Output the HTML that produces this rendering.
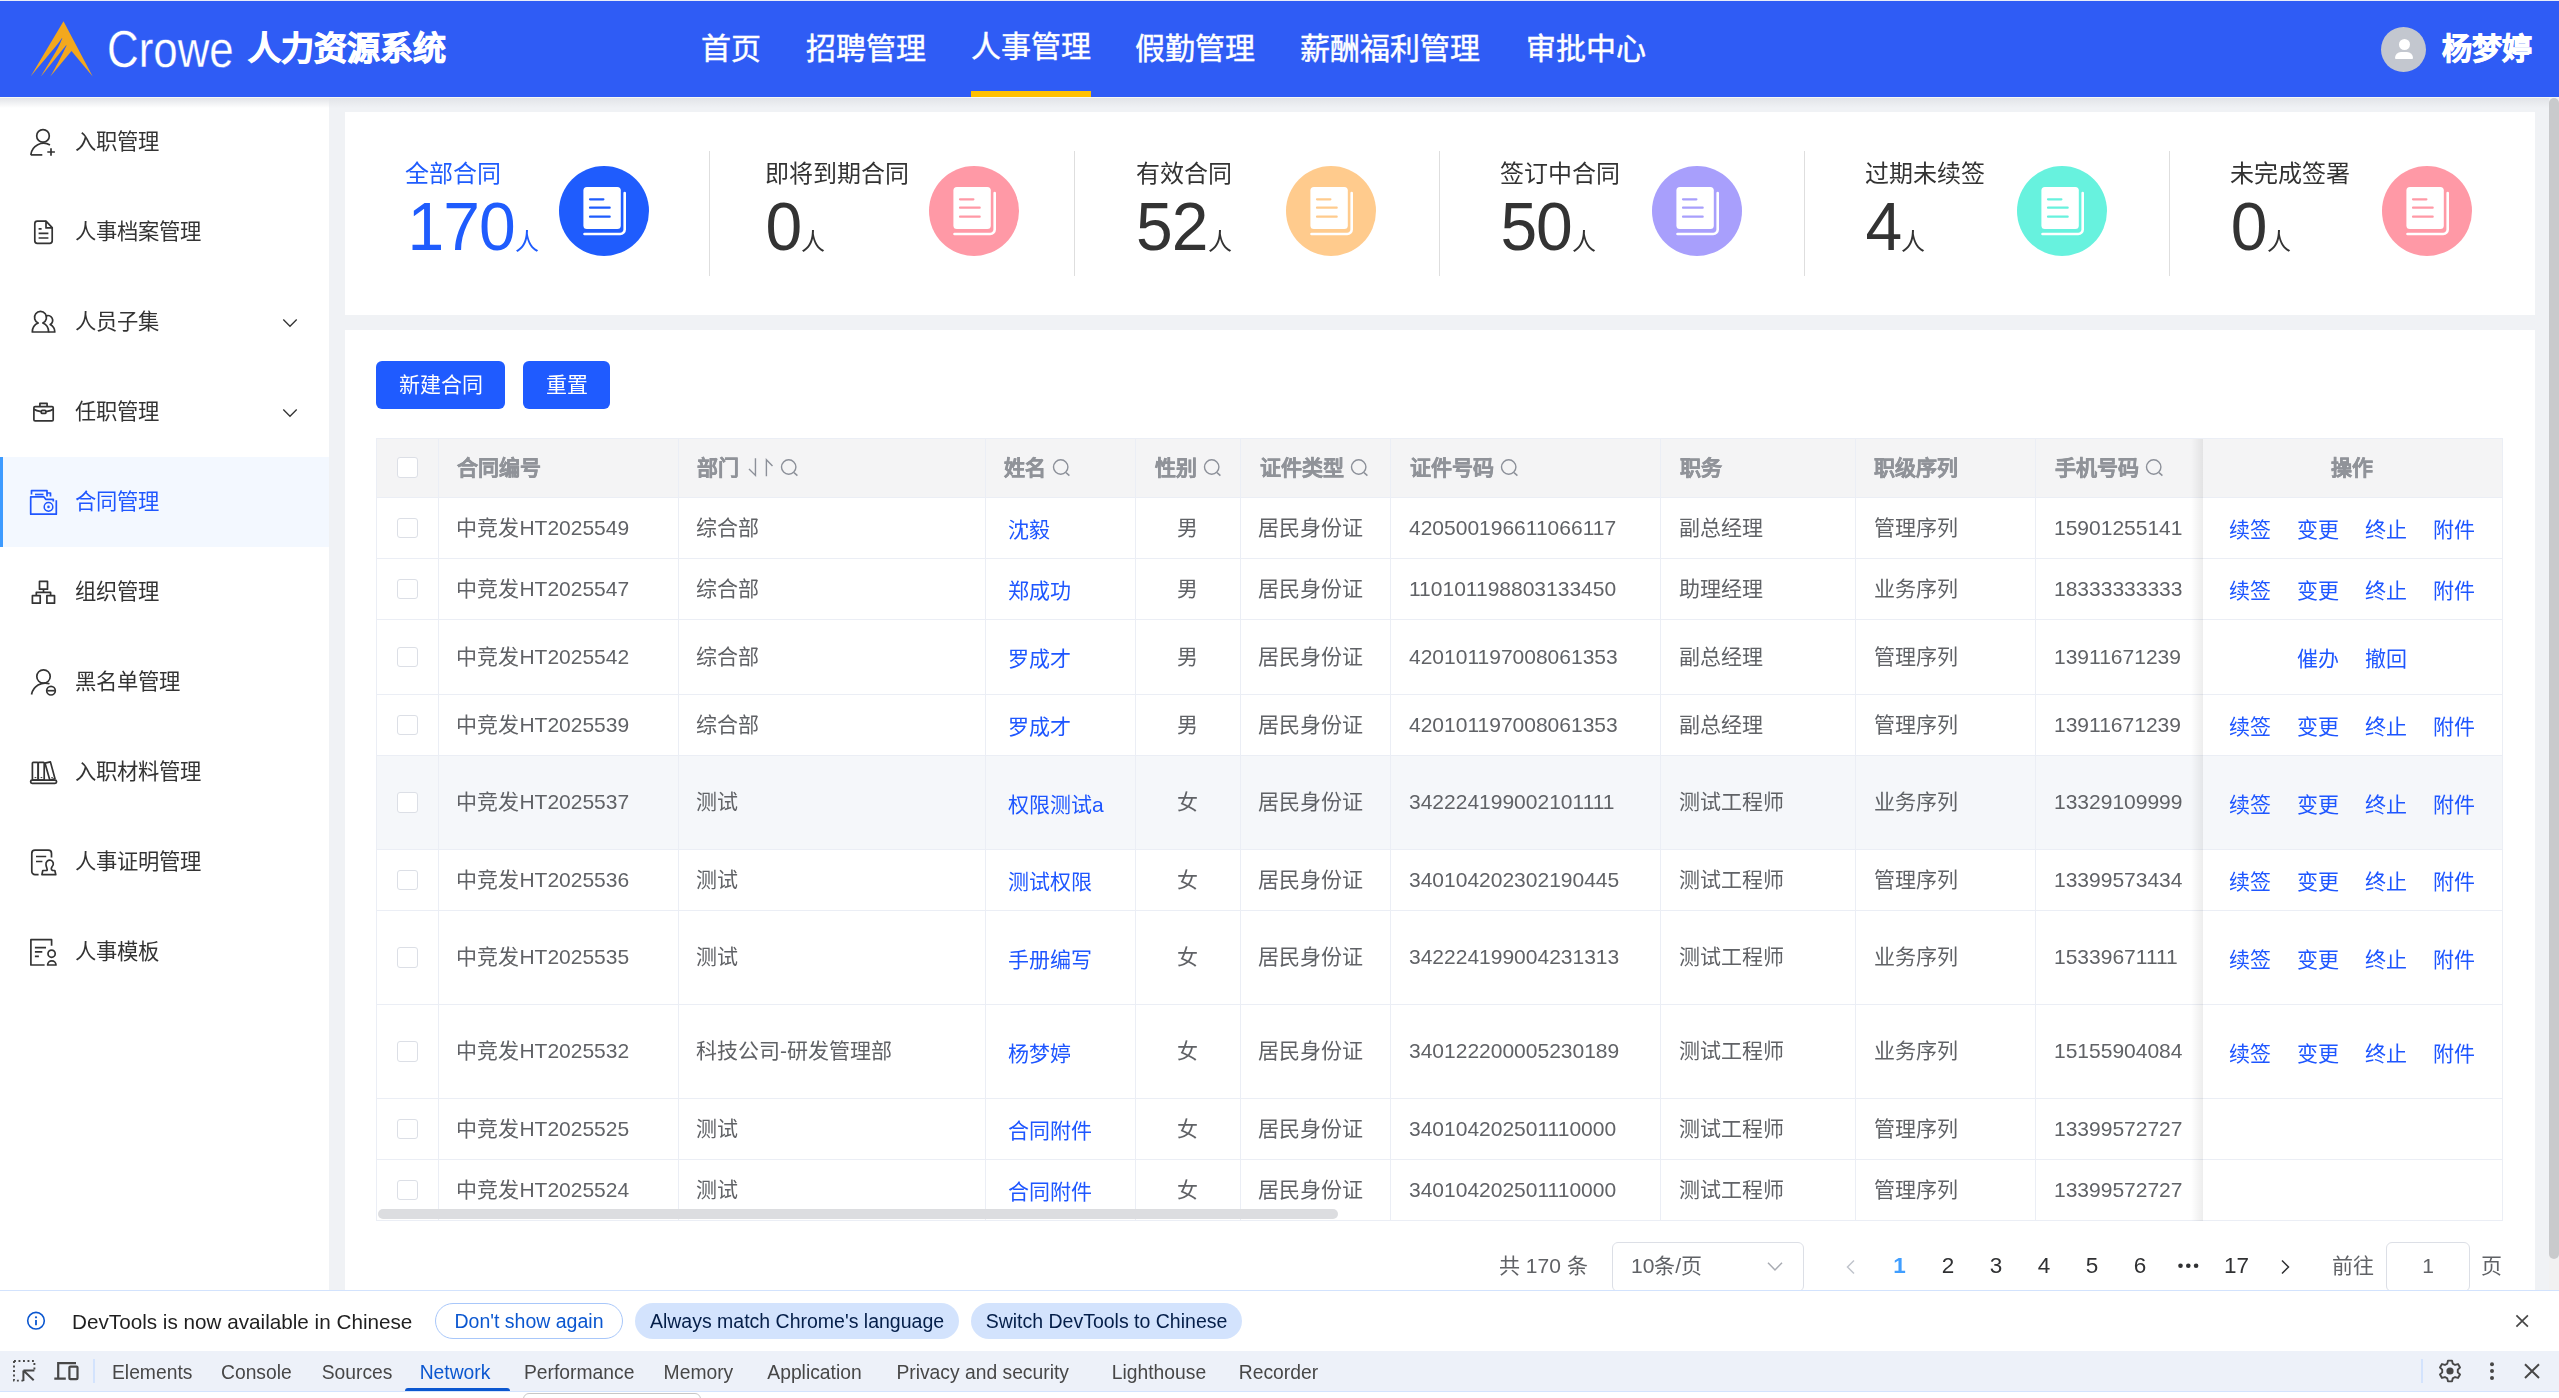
<!DOCTYPE html>
<html lang="zh-CN"><head><meta charset="utf-8">
<style>
*{box-sizing:border-box;margin:0;padding:0}
html,body{width:2559px;height:1398px;overflow:hidden}
body{position:relative;background:#f0f2f5;font-family:"Liberation Sans",sans-serif;color:#333}
.abs{position:absolute}
#topline{left:0;top:0;width:2559px;height:1px;background:#e8ecf8}
#hdr{left:0;top:1px;width:2559px;height:96px;background:#2f5cf5}
#hdrline{left:0;top:97px;width:2559px;height:1px;background:#f7f8f4}
#side{left:0;top:98px;width:329px;height:1192px;background:#fff}
#shadow{left:0;top:98px;width:2549px;height:10px;background:linear-gradient(#e2e4e8,rgba(240,242,245,0))}
.nav{top:-0.5px;height:97px;font-size:30px;color:#fff;line-height:97px;white-space:nowrap;-webkit-text-stroke:0.45px #fff}
.mi{left:0;width:329px;height:90px;font-size:21.3px;color:#333;white-space:nowrap}
.mi .t{position:absolute;left:75px;top:33px;line-height:24px}
.mi svg{position:absolute;left:28px;top:31px}
.mi .chev{position:absolute;left:282px;top:40px}
.card{background:#fff}
.sec{top:0;width:365px;height:203px}
.sep{top:39px;width:1px;height:125px;background:#dedede}
.stt{position:absolute;font-size:24px;line-height:28px;white-space:nowrap;color:#333}
.num{position:absolute;font-size:66px;line-height:66px;white-space:nowrap;color:#333;letter-spacing:-1px}
.num b{display:inline-block;font-weight:normal;transform:scaleY(1.045);transform-origin:0 85%}
.num small{font-size:24px}
.circ{position:absolute;width:90px;height:90px;border-radius:50%}
</style></head><body>
<div class="abs" id="topline"></div>
<div class="abs" id="hdr"></div>
<div class="abs" id="hdrline"></div>
<div class="abs" id="side"></div>
<div class="abs" id="shadow"></div>

<!-- logo -->
<svg class="abs" style="left:0;top:0" width="100" height="97" viewBox="0 0 100 97">
<path d="M63.5 21.2 L92.7 76.6 L71.5 50.9 L50.3 76.6 C54.5 70 62 55 66.6 45.5 Q66.9 44.8 65.9 45.6 L40.9 76.6 C48 64 58 50 62.3 38.3 Q62.5 37.6 61.6 38.6 C57.5 45 45 59 30.6 76.6 Z" fill="#f3a81e"/>
</svg>
<div class="abs" style="left:107px;top:14px;font-size:52.5px;line-height:70px;color:#fff;transform:scaleX(0.835);transform-origin:0 0;white-space:nowrap;-webkit-text-stroke:0.3px #2f5cf5">Crowe</div>
<div class="abs" style="left:248px;top:29px;font-size:33px;font-weight:bold;line-height:40px;color:#fff;-webkit-text-stroke:0.9px #fff;white-space:nowrap">人力资源系统</div>

<!-- nav -->
<div class="abs nav" style="left:701px">首页</div>
<div class="abs nav" style="left:806px">招聘管理</div>
<div class="abs nav" style="left:971px;top:-2.5px">人事管理</div>
<div class="abs" style="left:971px;top:91px;width:120px;height:6px;background:#ffc000"></div>
<div class="abs nav" style="left:1135px">假勤管理</div>
<div class="abs nav" style="left:1300px">薪酬福利管理</div>
<div class="abs nav" style="left:1526px">审批中心</div>

<!-- user -->
<div class="abs" style="left:2381px;top:27px;width:45px;height:45px;border-radius:50%;background:#c3c7cf"></div>
<div class="abs" style="left:2398.5px;top:39px;width:11px;height:11px;border-radius:50%;background:#fff"></div>
<div class="abs" style="left:2395px;top:52px;width:18px;height:7px;border-radius:6px 6px 1px 1px;background:#fff"></div>
<div class="abs" style="left:2441.5px;top:29px;font-size:30px;font-weight:bold;line-height:40px;color:#fff;-webkit-text-stroke:0.8px #fff;white-space:nowrap">杨梦婷</div>

<div id="wrap" style="position:absolute;left:0;top:0;width:2559px;height:1398px;will-change:transform">
<div class="abs" style="left:0;top:457px;width:329px;height:90px;background:#f3f8ff"></div>
<div class="abs" style="left:0;top:457px;width:3px;height:90px;background:#3d9bff"></div>
<div class="abs mi" style="top:97px"><svg width="40" height="40" viewBox="0 0 40 40" style="left:24px;top:25px" fill="none" stroke="#333" stroke-width="1.7" stroke-linejoin="round"><circle cx="19" cy="13.9" r="6.3"/><path d="M6.8 32.9 A13 13 0 0 1 26 22.9"/><path d="M6.8 32.9 H18.3"/><path d="M23.3 30 H30.9 M27 26.3 V33.7"/></svg><span class="t" style="color:#333">入职管理</span></div>
<div class="abs mi" style="top:187px"><svg width="40" height="40" viewBox="0 0 40 40" style="left:24px;top:25px" fill="none" stroke="#333" stroke-width="1.7" stroke-linejoin="round"><path d="M22 9.2 H13.3 A2.5 2.5 0 0 0 10.8 11.7 V28.8 A2.5 2.5 0 0 0 13.3 31.3 H25.7 A2.5 2.5 0 0 0 28.2 28.8 V15.6 L22 9.2 V15.9 H28.2"/><path d="M14.6 16.8 H17.6 M14.6 21.4 H24.4 M14.6 26 H24.4"/></svg><span class="t" style="color:#333">人事档案管理</span></div>
<div class="abs mi" style="top:277px"><svg width="40" height="40" viewBox="0 0 40 40" style="left:24px;top:25px" fill="none" stroke="#333" stroke-width="1.7" stroke-linejoin="round"><path d="M14.2 21 A6 6 0 1 1 18.8 21 C22.5 22.5 24.6 26 24.6 30 H8.3 C8.3 26 10.5 22.5 14.2 21 Z"/><path d="M21.6 14.2 A4.4 4.4 0 1 1 26.2 22.6 C28.8 24 30.8 27 30.8 30 H24.6"/></svg><span class="t" style="color:#333">人员子集</span><svg class="chev" width="20" height="12" viewBox="0 0 20 12" style="left:280px;top:41px"><path d="M3.3 1.5 L10 8.3 L16.7 1.5" fill="none" stroke="#333" stroke-width="1.3"/></svg></div>
<div class="abs mi" style="top:367px"><svg width="40" height="40" viewBox="0 0 40 40" style="left:24px;top:25px" fill="none" stroke="#333" stroke-width="1.7" stroke-linejoin="round"><rect x="9.9" y="14.6" width="19.3" height="14.3" rx="1.2"/><path d="M15.9 14.6 V11.4 H23.1 V14.6"/><path d="M9.9 17.2 C12 18.6 15 19.2 17.2 19.6 M22 19.6 C24.2 19.2 27.2 18.6 29.2 17.2"/><rect x="17.3" y="18.4" width="4.6" height="3" rx="1"/></svg><span class="t" style="color:#333">任职管理</span><svg class="chev" width="20" height="12" viewBox="0 0 20 12" style="left:280px;top:41px"><path d="M3.3 1.5 L10 8.3 L16.7 1.5" fill="none" stroke="#333" stroke-width="1.3"/></svg></div>
<div class="abs mi" style="top:457px"><svg width="40" height="40" viewBox="0 0 40 40" style="left:24px;top:25px" fill="none" stroke="#1f56ff" stroke-width="1.7" stroke-linejoin="round"><path d="M7.5 12.5 V8.6 H23 V14.6 M23 11 H26.5 V14.6"/><path d="M11 12.5 H19.5"/><path d="M29.3 19.6 V17.3 H21.7 L19.8 14.8 H6.7 V32.2 H32.3 V18.3"/><circle cx="24.5" cy="24.9" r="4.3" stroke-width="1.5"/><circle cx="24.5" cy="24.9" r="1.3" fill="#1f56ff" stroke="none"/></svg><span class="t" style="color:#1f56ff">合同管理</span></div>
<div class="abs mi" style="top:547px"><svg width="40" height="40" viewBox="0 0 40 40" style="left:24px;top:25px" fill="none" stroke="#333" stroke-width="1.7" stroke-linejoin="round"><rect x="15.5" y="9.3" width="8" height="7.9"/><path d="M19.5 17.2 V20.4 M12.3 23.7 V20.4 H26.6 V23.7"/><rect x="8.4" y="23.7" width="7.8" height="7.5"/><rect x="22.9" y="23.7" width="7.6" height="7.5"/></svg><span class="t" style="color:#333">组织管理</span></div>
<div class="abs mi" style="top:637px"><svg width="40" height="40" viewBox="0 0 40 40" style="left:24px;top:25px" fill="none" stroke="#333" stroke-width="1.7" stroke-linejoin="round"><circle cx="19.5" cy="14.5" r="6.7"/><path d="M7.5 32.5 A14 14 0 0 1 25.5 21.8"/><circle cx="27" cy="28.7" r="4.3"/><path d="M23.2 28.7 H30.8"/></svg><span class="t" style="color:#333">黑名单管理</span></div>
<div class="abs mi" style="top:727px"><svg width="40" height="40" viewBox="0 0 40 40" style="left:24px;top:25px" fill="none" stroke="#333" stroke-width="1.7" stroke-linejoin="round"><rect x="8.4" y="10.4" width="5.8" height="17.8" rx="0.8"/><rect x="14.2" y="10.4" width="6" height="17.8" rx="0.8"/><path d="M21 11.2 L26.4 9.9 L31 26.8 L25.8 28.1 Z"/><rect x="6.6" y="28.2" width="26" height="3.2" rx="1.6"/><path d="M10.6 25.6 H12.3 M16.6 25.6 H18.3 M27.3 25.6 H28.8" stroke-width="1"/></svg><span class="t" style="color:#333">入职材料管理</span></div>
<div class="abs mi" style="top:817px"><svg width="40" height="40" viewBox="0 0 40 40" style="left:24px;top:25px" fill="none" stroke="#333" stroke-width="1.7" stroke-linejoin="round"><path d="M14.6 32.6 H11 A3.2 3.2 0 0 1 7.8 29.4 V11.4 A3.2 3.2 0 0 1 11 8.2 H24.3 A3.2 3.2 0 0 1 27.5 11.4 V15.6"/><path d="M12 14.5 H22.2 M12 19.5 H18.4"/><path d="M22.9 28.5 C24 27 22 25.5 22 22.5 A3.7 3.7 0 1 1 28.2 24.5 C27.2 26 26.6 27.6 28.6 28.5 H30.8 L31.8 32.6 H17.9 L18.8 28.5 Z"/></svg><span class="t" style="color:#333">人事证明管理</span></div>
<div class="abs mi" style="top:907px"><svg width="40" height="40" viewBox="0 0 40 40" style="left:24px;top:25px" fill="none" stroke="#333" stroke-width="1.7" stroke-linejoin="round"><path d="M20.6 33 H6.9 V7.7 H27.6 V13.8"/><path d="M10.9 15.6 H22 M10.9 19.9 H18.3 M10.9 24.3 H14.9"/><circle cx="27.6" cy="21.7" r="3.6"/><path d="M23.6 33 A4.2 4.2 0 0 1 32 33 Z"/></svg><span class="t" style="color:#333">人事模板</span></div>
<div class="abs card" style="left:345px;top:112px;width:2190px;height:203px"></div>
<div class="abs stt" style="left:405px;top:159.5px;color:#1f5cfd">全部合同</div>
<div class="abs num" style="left:407.5px;top:193.5px;color:#1f5cfd"><b>170</b><small style="letter-spacing:0">人</small></div>
<div class="abs circ" style="left:559px;top:166px;background:#1f5cfd"><svg width="90" height="90" viewBox="0 0 90 90" style="position:absolute;left:0;top:0">
<path d="M65.7 27 V63.5 A4.5 4.5 0 0 1 61.2 68 H25.5" fill="none" stroke="#fff" stroke-width="2.6" stroke-linecap="round"/>
<rect x="24.4" y="21" width="37.4" height="42" rx="3.5" fill="#fff"/>
<path d="M31 33.3 H44.4 M31 41.7 H50.7 M31 50.7 H50.7" stroke="#1f5cfd" stroke-width="2.2" stroke-linecap="round"/></svg></div>
<div class="abs sep" style="left:709px;top:151px"></div>
<div class="abs stt" style="left:765px;top:159.5px;color:#333">即将到期合同</div>
<div class="abs num" style="left:765.4px;top:193.5px;color:#333"><b>0</b><small style="letter-spacing:0">人</small></div>
<div class="abs circ" style="left:928.6px;top:166px;background:#ff99a6"><svg width="90" height="90" viewBox="0 0 90 90" style="position:absolute;left:0;top:0">
<path d="M65.7 27 V63.5 A4.5 4.5 0 0 1 61.2 68 H25.5" fill="none" stroke="#fff" stroke-width="2.6" stroke-linecap="round"/>
<rect x="24.4" y="21" width="37.4" height="42" rx="3.5" fill="#fff"/>
<path d="M31 33.3 H44.4 M31 41.7 H50.7 M31 50.7 H50.7" stroke="#ff99a6" stroke-width="2.2" stroke-linecap="round"/></svg></div>
<div class="abs sep" style="left:1074px;top:151px"></div>
<div class="abs stt" style="left:1135.7px;top:159.5px;color:#333">有效合同</div>
<div class="abs num" style="left:1136.1000000000001px;top:193.5px;color:#333"><b>52</b><small style="letter-spacing:0">人</small></div>
<div class="abs circ" style="left:1286px;top:166px;background:#ffcb8d"><svg width="90" height="90" viewBox="0 0 90 90" style="position:absolute;left:0;top:0">
<path d="M65.7 27 V63.5 A4.5 4.5 0 0 1 61.2 68 H25.5" fill="none" stroke="#fff" stroke-width="2.6" stroke-linecap="round"/>
<rect x="24.4" y="21" width="37.4" height="42" rx="3.5" fill="#fff"/>
<path d="M31 33.3 H44.4 M31 41.7 H50.7 M31 50.7 H50.7" stroke="#ffcb8d" stroke-width="2.2" stroke-linecap="round"/></svg></div>
<div class="abs sep" style="left:1439px;top:151px"></div>
<div class="abs stt" style="left:1500px;top:159.5px;color:#333">签订中合同</div>
<div class="abs num" style="left:1500.4px;top:193.5px;color:#333"><b>50</b><small style="letter-spacing:0">人</small></div>
<div class="abs circ" style="left:1651.5px;top:166px;background:#a89ffc"><svg width="90" height="90" viewBox="0 0 90 90" style="position:absolute;left:0;top:0">
<path d="M65.7 27 V63.5 A4.5 4.5 0 0 1 61.2 68 H25.5" fill="none" stroke="#fff" stroke-width="2.6" stroke-linecap="round"/>
<rect x="24.4" y="21" width="37.4" height="42" rx="3.5" fill="#fff"/>
<path d="M31 33.3 H44.4 M31 41.7 H50.7 M31 50.7 H50.7" stroke="#a89ffc" stroke-width="2.2" stroke-linecap="round"/></svg></div>
<div class="abs sep" style="left:1804px;top:151px"></div>
<div class="abs stt" style="left:1865px;top:159.5px;color:#333">过期未续签</div>
<div class="abs num" style="left:1865.4px;top:193.5px;color:#333"><b>4</b><small style="letter-spacing:0">人</small></div>
<div class="abs circ" style="left:2016.8px;top:166px;background:#67f2de"><svg width="90" height="90" viewBox="0 0 90 90" style="position:absolute;left:0;top:0">
<path d="M65.7 27 V63.5 A4.5 4.5 0 0 1 61.2 68 H25.5" fill="none" stroke="#fff" stroke-width="2.6" stroke-linecap="round"/>
<rect x="24.4" y="21" width="37.4" height="42" rx="3.5" fill="#fff"/>
<path d="M31 33.3 H44.4 M31 41.7 H50.7 M31 50.7 H50.7" stroke="#67f2de" stroke-width="2.2" stroke-linecap="round"/></svg></div>
<div class="abs sep" style="left:2169px;top:151px"></div>
<div class="abs stt" style="left:2230.4px;top:159.5px;color:#333">未完成签署</div>
<div class="abs num" style="left:2230.8px;top:193.5px;color:#333"><b>0</b><small style="letter-spacing:0">人</small></div>
<div class="abs circ" style="left:2381.7px;top:166px;background:#ff99a6"><svg width="90" height="90" viewBox="0 0 90 90" style="position:absolute;left:0;top:0">
<path d="M65.7 27 V63.5 A4.5 4.5 0 0 1 61.2 68 H25.5" fill="none" stroke="#fff" stroke-width="2.6" stroke-linecap="round"/>
<rect x="24.4" y="21" width="37.4" height="42" rx="3.5" fill="#fff"/>
<path d="M31 33.3 H44.4 M31 41.7 H50.7 M31 50.7 H50.7" stroke="#ff99a6" stroke-width="2.2" stroke-linecap="round"/></svg></div>
<style>
.btn{background:#1f5bff;border-radius:6px;color:#fff;font-size:21px;line-height:48px;text-align:center;white-space:nowrap}
.cb{width:20.6px;height:20.6px;border:1.5px solid #dcdfe6;border-radius:3px;background:#fff}
.th{height:59px;line-height:59px;font-size:21px;font-weight:bold;color:#909399;white-space:nowrap;-webkit-text-stroke:0.4px #909399}
.td{font-size:21px;line-height:24px;color:#606266;white-space:nowrap}
.lk{color:#1e56ff}
.pg{font-size:21px;line-height:30px;color:#606266;white-space:nowrap}
.pgn{width:48px;text-align:center;font-size:22.5px;line-height:30px;white-space:nowrap}
</style>
<div class="abs card" style="left:345px;top:330px;width:2190px;height:960px"></div>
<div class="abs btn" style="left:376px;top:361px;width:129px;height:48px">新建合同</div>
<div class="abs btn" style="left:523px;top:361px;width:87px;height:48px">重置</div>
<div class="abs" style="left:376px;top:438px;width:2127px;height:59px;background:#f4f4f5"></div>
<div class="abs" style="left:376px;top:755px;width:2126px;height:94px;background:#f5f7fa"></div>
<div class="abs" style="left:376px;top:438px;width:2127px;height:1px;background:#ebeef5"></div>
<div class="abs" style="left:376px;top:497px;width:2127px;height:1px;background:#ebeef5"></div>
<div class="abs" style="left:376px;top:558px;width:2127px;height:1px;background:#ebeef5"></div>
<div class="abs" style="left:376px;top:619px;width:2127px;height:1px;background:#ebeef5"></div>
<div class="abs" style="left:376px;top:694px;width:2127px;height:1px;background:#ebeef5"></div>
<div class="abs" style="left:376px;top:755px;width:2127px;height:1px;background:#ebeef5"></div>
<div class="abs" style="left:376px;top:849px;width:2127px;height:1px;background:#ebeef5"></div>
<div class="abs" style="left:376px;top:910px;width:2127px;height:1px;background:#ebeef5"></div>
<div class="abs" style="left:376px;top:1004px;width:2127px;height:1px;background:#ebeef5"></div>
<div class="abs" style="left:376px;top:1098px;width:2127px;height:1px;background:#ebeef5"></div>
<div class="abs" style="left:376px;top:1159px;width:2127px;height:1px;background:#ebeef5"></div>
<div class="abs" style="left:376px;top:1220px;width:2127px;height:1px;background:#ebeef5"></div>
<div class="abs" style="left:376px;top:438px;width:1px;height:783px;background:#ebeef5"></div>
<div class="abs" style="left:438px;top:438px;width:1px;height:783px;background:#ebeef5"></div>
<div class="abs" style="left:678px;top:438px;width:1px;height:783px;background:#ebeef5"></div>
<div class="abs" style="left:985px;top:438px;width:1px;height:783px;background:#ebeef5"></div>
<div class="abs" style="left:1135px;top:438px;width:1px;height:783px;background:#ebeef5"></div>
<div class="abs" style="left:1240px;top:438px;width:1px;height:783px;background:#ebeef5"></div>
<div class="abs" style="left:1390px;top:438px;width:1px;height:783px;background:#ebeef5"></div>
<div class="abs" style="left:1660px;top:438px;width:1px;height:783px;background:#ebeef5"></div>
<div class="abs" style="left:1855px;top:438px;width:1px;height:783px;background:#ebeef5"></div>
<div class="abs" style="left:2035px;top:438px;width:1px;height:783px;background:#ebeef5"></div>
<div class="abs" style="left:2502px;top:438px;width:1px;height:783px;background:#ebeef5"></div>
<div class="abs" style="left:2191px;top:439px;width:12px;height:782px;background:linear-gradient(90deg,rgba(0,0,0,0),rgba(0,0,0,0.07))"></div>
<div class="abs cb" style="left:397px;top:457px"></div>
<div class="abs th" style="left:456.5px;top:437.5px">合同编号</div>
<div class="abs th" style="left:696.5px;top:437.5px">部门</div>
<div class="abs th" style="left:1004.0px;top:437.5px">姓名</div>
<svg class="abs" style="left:1051px;top:457px" width="20" height="20" viewBox="0 0 20 20"><circle cx="9.7" cy="10" r="7.2" fill="none" stroke="#8c9099" stroke-width="1.4"/><path d="M15 15.6 L18.4 18.6" stroke="#8c9099" stroke-width="1.5"/></svg>
<div class="abs th" style="left:1154.9px;top:437.5px">性别</div>
<svg class="abs" style="left:1202px;top:457px" width="20" height="20" viewBox="0 0 20 20"><circle cx="9.7" cy="10" r="7.2" fill="none" stroke="#8c9099" stroke-width="1.4"/><path d="M15 15.6 L18.4 18.6" stroke="#8c9099" stroke-width="1.5"/></svg>
<div class="abs th" style="left:1259.5px;top:437.5px">证件类型</div>
<svg class="abs" style="left:1349px;top:457px" width="20" height="20" viewBox="0 0 20 20"><circle cx="9.7" cy="10" r="7.2" fill="none" stroke="#8c9099" stroke-width="1.4"/><path d="M15 15.6 L18.4 18.6" stroke="#8c9099" stroke-width="1.5"/></svg>
<div class="abs th" style="left:1409.5px;top:437.5px">证件号码</div>
<svg class="abs" style="left:1499px;top:457px" width="20" height="20" viewBox="0 0 20 20"><circle cx="9.7" cy="10" r="7.2" fill="none" stroke="#8c9099" stroke-width="1.4"/><path d="M15 15.6 L18.4 18.6" stroke="#8c9099" stroke-width="1.5"/></svg>
<div class="abs th" style="left:1679.5px;top:437.5px">职务</div>
<div class="abs th" style="left:1874.0px;top:437.5px">职级序列</div>
<div class="abs th" style="left:2054.5px;top:437.5px">手机号码</div>
<svg class="abs" style="left:2144px;top:457px" width="20" height="20" viewBox="0 0 20 20"><circle cx="9.7" cy="10" r="7.2" fill="none" stroke="#8c9099" stroke-width="1.4"/><path d="M15 15.6 L18.4 18.6" stroke="#8c9099" stroke-width="1.5"/></svg>
<svg class="abs" style="left:745px;top:455px" width="32" height="24" viewBox="0 0 32 24"><path d="M10.45 3.2 V20.4 L4 13.9 M21.4 21.3 V4.8 L27.5 11.1" fill="none" stroke="#8c9099" stroke-width="1.4"/></svg>
<svg class="abs" style="left:779px;top:457px" width="20" height="20" viewBox="0 0 20 20"><circle cx="9.7" cy="10" r="7.2" fill="none" stroke="#8c9099" stroke-width="1.4"/><path d="M15 15.6 L18.4 18.6" stroke="#8c9099" stroke-width="1.5"/></svg>
<div class="abs cb" style="left:397px;top:517.5px"></div>
<div class="abs td" style="left:456.4px;top:515.5px">中竞发HT2025549</div>
<div class="abs td" style="left:696px;top:515.5px">综合部</div>
<div class="abs td" style="left:1409px;top:515.5px">420500196611066117</div>
<div class="abs td" style="left:1678.5px;top:515.5px">副总经理</div>
<div class="abs td" style="left:1873.5px;top:515.5px">管理序列</div>
<div class="abs td" style="left:2054px;top:515.5px">15901255141</div>
<div class="abs td" style="left:1258.4px;top:515.5px">居民身份证</div>
<div class="abs td lk" style="left:1008px;top:518.0px">沈毅</div>
<div class="abs td" style="left:1135px;top:515.5px;width:105px;text-align:center">男</div>
<div class="abs td lk" style="left:2228.7px;top:518.0px">续签</div>
<div class="abs td lk" style="left:2296.8999999999996px;top:518.0px">变更</div>
<div class="abs td lk" style="left:2365.1px;top:518.0px">终止</div>
<div class="abs td lk" style="left:2433.2999999999997px;top:518.0px">附件</div>
<div class="abs cb" style="left:397px;top:578.5px"></div>
<div class="abs td" style="left:456.4px;top:576.5px">中竞发HT2025547</div>
<div class="abs td" style="left:696px;top:576.5px">综合部</div>
<div class="abs td" style="left:1409px;top:576.5px">110101198803133450</div>
<div class="abs td" style="left:1678.5px;top:576.5px">助理经理</div>
<div class="abs td" style="left:1873.5px;top:576.5px">业务序列</div>
<div class="abs td" style="left:2054px;top:576.5px">18333333333</div>
<div class="abs td" style="left:1258.4px;top:576.5px">居民身份证</div>
<div class="abs td lk" style="left:1008px;top:579.0px">郑成功</div>
<div class="abs td" style="left:1135px;top:576.5px;width:105px;text-align:center">男</div>
<div class="abs td lk" style="left:2228.7px;top:579.0px">续签</div>
<div class="abs td lk" style="left:2296.8999999999996px;top:579.0px">变更</div>
<div class="abs td lk" style="left:2365.1px;top:579.0px">终止</div>
<div class="abs td lk" style="left:2433.2999999999997px;top:579.0px">附件</div>
<div class="abs cb" style="left:397px;top:646.5px"></div>
<div class="abs td" style="left:456.4px;top:644.5px">中竞发HT2025542</div>
<div class="abs td" style="left:696px;top:644.5px">综合部</div>
<div class="abs td" style="left:1409px;top:644.5px">420101197008061353</div>
<div class="abs td" style="left:1678.5px;top:644.5px">副总经理</div>
<div class="abs td" style="left:1873.5px;top:644.5px">管理序列</div>
<div class="abs td" style="left:2054px;top:644.5px">13911671239</div>
<div class="abs td" style="left:1258.4px;top:644.5px">居民身份证</div>
<div class="abs td lk" style="left:1008px;top:647.0px">罗成才</div>
<div class="abs td" style="left:1135px;top:644.5px;width:105px;text-align:center">男</div>
<div class="abs td lk" style="left:2297.3px;top:647.0px">催办</div>
<div class="abs td lk" style="left:2364.8px;top:647.0px">撤回</div>
<div class="abs cb" style="left:397px;top:714.5px"></div>
<div class="abs td" style="left:456.4px;top:712.5px">中竞发HT2025539</div>
<div class="abs td" style="left:696px;top:712.5px">综合部</div>
<div class="abs td" style="left:1409px;top:712.5px">420101197008061353</div>
<div class="abs td" style="left:1678.5px;top:712.5px">副总经理</div>
<div class="abs td" style="left:1873.5px;top:712.5px">管理序列</div>
<div class="abs td" style="left:2054px;top:712.5px">13911671239</div>
<div class="abs td" style="left:1258.4px;top:712.5px">居民身份证</div>
<div class="abs td lk" style="left:1008px;top:715.0px">罗成才</div>
<div class="abs td" style="left:1135px;top:712.5px;width:105px;text-align:center">男</div>
<div class="abs td lk" style="left:2228.7px;top:715.0px">续签</div>
<div class="abs td lk" style="left:2296.8999999999996px;top:715.0px">变更</div>
<div class="abs td lk" style="left:2365.1px;top:715.0px">终止</div>
<div class="abs td lk" style="left:2433.2999999999997px;top:715.0px">附件</div>
<div class="abs cb" style="left:397px;top:792.0px"></div>
<div class="abs td" style="left:456.4px;top:790.0px">中竞发HT2025537</div>
<div class="abs td" style="left:696px;top:790.0px">测试</div>
<div class="abs td" style="left:1409px;top:790.0px">342224199002101111</div>
<div class="abs td" style="left:1678.5px;top:790.0px">测试工程师</div>
<div class="abs td" style="left:1873.5px;top:790.0px">业务序列</div>
<div class="abs td" style="left:2054px;top:790.0px">13329109999</div>
<div class="abs td" style="left:1258.4px;top:790.0px">居民身份证</div>
<div class="abs td lk" style="left:1008px;top:792.5px">权限测试a</div>
<div class="abs td" style="left:1135px;top:790.0px;width:105px;text-align:center">女</div>
<div class="abs td lk" style="left:2228.7px;top:792.5px">续签</div>
<div class="abs td lk" style="left:2296.8999999999996px;top:792.5px">变更</div>
<div class="abs td lk" style="left:2365.1px;top:792.5px">终止</div>
<div class="abs td lk" style="left:2433.2999999999997px;top:792.5px">附件</div>
<div class="abs cb" style="left:397px;top:869.5px"></div>
<div class="abs td" style="left:456.4px;top:867.5px">中竞发HT2025536</div>
<div class="abs td" style="left:696px;top:867.5px">测试</div>
<div class="abs td" style="left:1409px;top:867.5px">340104202302190445</div>
<div class="abs td" style="left:1678.5px;top:867.5px">测试工程师</div>
<div class="abs td" style="left:1873.5px;top:867.5px">管理序列</div>
<div class="abs td" style="left:2054px;top:867.5px">13399573434</div>
<div class="abs td" style="left:1258.4px;top:867.5px">居民身份证</div>
<div class="abs td lk" style="left:1008px;top:870.0px">测试权限</div>
<div class="abs td" style="left:1135px;top:867.5px;width:105px;text-align:center">女</div>
<div class="abs td lk" style="left:2228.7px;top:870.0px">续签</div>
<div class="abs td lk" style="left:2296.8999999999996px;top:870.0px">变更</div>
<div class="abs td lk" style="left:2365.1px;top:870.0px">终止</div>
<div class="abs td lk" style="left:2433.2999999999997px;top:870.0px">附件</div>
<div class="abs cb" style="left:397px;top:947.0px"></div>
<div class="abs td" style="left:456.4px;top:945.0px">中竞发HT2025535</div>
<div class="abs td" style="left:696px;top:945.0px">测试</div>
<div class="abs td" style="left:1409px;top:945.0px">342224199004231313</div>
<div class="abs td" style="left:1678.5px;top:945.0px">测试工程师</div>
<div class="abs td" style="left:1873.5px;top:945.0px">业务序列</div>
<div class="abs td" style="left:2054px;top:945.0px">15339671111</div>
<div class="abs td" style="left:1258.4px;top:945.0px">居民身份证</div>
<div class="abs td lk" style="left:1008px;top:947.5px">手册编写</div>
<div class="abs td" style="left:1135px;top:945.0px;width:105px;text-align:center">女</div>
<div class="abs td lk" style="left:2228.7px;top:947.5px">续签</div>
<div class="abs td lk" style="left:2296.8999999999996px;top:947.5px">变更</div>
<div class="abs td lk" style="left:2365.1px;top:947.5px">终止</div>
<div class="abs td lk" style="left:2433.2999999999997px;top:947.5px">附件</div>
<div class="abs cb" style="left:397px;top:1041.0px"></div>
<div class="abs td" style="left:456.4px;top:1039.0px">中竞发HT2025532</div>
<div class="abs td" style="left:696px;top:1039.0px">科技公司-研发管理部</div>
<div class="abs td" style="left:1409px;top:1039.0px">340122200005230189</div>
<div class="abs td" style="left:1678.5px;top:1039.0px">测试工程师</div>
<div class="abs td" style="left:1873.5px;top:1039.0px">业务序列</div>
<div class="abs td" style="left:2054px;top:1039.0px">15155904084</div>
<div class="abs td" style="left:1258.4px;top:1039.0px">居民身份证</div>
<div class="abs td lk" style="left:1008px;top:1041.5px">杨梦婷</div>
<div class="abs td" style="left:1135px;top:1039.0px;width:105px;text-align:center">女</div>
<div class="abs td lk" style="left:2228.7px;top:1041.5px">续签</div>
<div class="abs td lk" style="left:2296.8999999999996px;top:1041.5px">变更</div>
<div class="abs td lk" style="left:2365.1px;top:1041.5px">终止</div>
<div class="abs td lk" style="left:2433.2999999999997px;top:1041.5px">附件</div>
<div class="abs cb" style="left:397px;top:1118.5px"></div>
<div class="abs td" style="left:456.4px;top:1116.5px">中竞发HT2025525</div>
<div class="abs td" style="left:696px;top:1116.5px">测试</div>
<div class="abs td" style="left:1409px;top:1116.5px">340104202501110000</div>
<div class="abs td" style="left:1678.5px;top:1116.5px">测试工程师</div>
<div class="abs td" style="left:1873.5px;top:1116.5px">管理序列</div>
<div class="abs td" style="left:2054px;top:1116.5px">13399572727</div>
<div class="abs td" style="left:1258.4px;top:1116.5px">居民身份证</div>
<div class="abs td lk" style="left:1008px;top:1119.0px">合同附件</div>
<div class="abs td" style="left:1135px;top:1116.5px;width:105px;text-align:center">女</div>
<div class="abs cb" style="left:397px;top:1179.5px"></div>
<div class="abs td" style="left:456.4px;top:1177.5px">中竞发HT2025524</div>
<div class="abs td" style="left:696px;top:1177.5px">测试</div>
<div class="abs td" style="left:1409px;top:1177.5px">340104202501110000</div>
<div class="abs td" style="left:1678.5px;top:1177.5px">测试工程师</div>
<div class="abs td" style="left:1873.5px;top:1177.5px">管理序列</div>
<div class="abs td" style="left:2054px;top:1177.5px">13399572727</div>
<div class="abs td" style="left:1258.4px;top:1177.5px">居民身份证</div>
<div class="abs td lk" style="left:1008px;top:1180.0px">合同附件</div>
<div class="abs td" style="left:1135px;top:1177.5px;width:105px;text-align:center">女</div>
<div class="abs th" style="left:2202px;top:437.5px;width:300px;text-align:center">操作</div>
<div class="abs" style="left:378px;top:1209px;width:960px;height:10px;border-radius:5px;background:#dcdde0"></div>
<div class="abs pg" style="left:1499px;top:1251px">共 170 条</div>
<div class="abs" style="left:1612px;top:1242px;width:192px;height:50px;border:1.5px solid #dcdfe6;border-radius:6px;background:#fff"></div>
<div class="abs pg" style="left:1631px;top:1251px">10条/页</div>
<svg class="abs" style="left:1764px;top:1258px" width="22" height="16" viewBox="0 0 22 16"><path d="M4 4.7 L11 12 L18 4.7" fill="none" stroke="#a8abb2" stroke-width="1.5"/></svg>
<svg class="abs" style="left:1842px;top:1256px" width="18" height="20" viewBox="0 0 18 20"><path d="M12 4.5 L5.5 11 L12 17.5" fill="none" stroke="#c0c4cc" stroke-width="1.5"/></svg>
<div class="abs pgn" style="left:1875.5px;top:1251px;color:#409eff;font-weight:bold">1</div>
<div class="abs pgn" style="left:1924px;top:1251px;color:#303133">2</div>
<div class="abs pgn" style="left:1972px;top:1251px;color:#303133">3</div>
<div class="abs pgn" style="left:2020px;top:1251px;color:#303133">4</div>
<div class="abs pgn" style="left:2068px;top:1251px;color:#303133">5</div>
<div class="abs pgn" style="left:2116px;top:1251px;color:#303133">6</div>
<div class="abs pgn" style="left:2212.5px;top:1251px;color:#303133">17</div>
<svg class="abs" style="left:2176px;top:1258px" width="26" height="14" viewBox="0 0 26 14"><circle cx="4.5" cy="7.8" r="2.3" fill="#303133"/><circle cx="12.3" cy="7.8" r="2.3" fill="#303133"/><circle cx="20.1" cy="7.8" r="2.3" fill="#303133"/></svg>
<svg class="abs" style="left:2276px;top:1256px" width="18" height="20" viewBox="0 0 18 20"><path d="M6 4.5 L12.5 11 L6 17.5" fill="none" stroke="#303133" stroke-width="1.5"/></svg>
<div class="abs pg" style="left:2332px;top:1251px">前往</div>
<div class="abs" style="left:2386px;top:1242px;width:84px;height:50px;border:1.5px solid #dcdfe6;border-radius:6px;background:#fff"></div>
<div class="abs pg" style="left:2386px;top:1251px;width:84px;text-align:center">1</div>
<div class="abs pg" style="left:2481px;top:1251px">页</div>
<div class="abs" style="left:2549px;top:98px;width:10px;height:1192px;background:#f1f1f1"></div>
<div class="abs" style="left:2549px;top:98px;width:10px;height:1161px;border-radius:5px;background:#c9cacc"></div>
<style>
.dt{font-size:20.7px;line-height:24px;white-space:nowrap;color:#1f1f1f}
.pill{border-radius:19px;font-size:19.5px;line-height:34px;text-align:center;white-space:nowrap}
.tab{font-size:19.3px;line-height:24px;white-space:nowrap;color:#474747}
</style>
<div class="abs" style="left:0;top:1290px;width:2559px;height:108px;background:#fff"></div>
<div class="abs" style="left:0;top:1290px;width:2559px;height:1px;background:#d3e3fd"></div>
<svg class="abs" style="left:24px;top:1309px" width="24" height="24" viewBox="0 0 24 24"><circle cx="12" cy="11.7" r="8.3" fill="none" stroke="#0b57d0" stroke-width="1.6"/><circle cx="12" cy="8.3" r="1.1" fill="#0b57d0"/><path d="M12 10.9 V16.3" stroke="#0b57d0" stroke-width="1.8"/></svg>
<div class="abs dt" style="left:72px;top:1310px">DevTools is now available in Chinese</div>
<div class="abs pill" style="left:435px;top:1303px;width:188px;height:36px;border:1px solid #a8c7fa;color:#0b57d0">Don't show again</div>
<div class="abs pill" style="left:635px;top:1303px;width:324px;height:36px;background:#d3e3fd;color:#041e49;line-height:36px">Always match Chrome's language</div>
<div class="abs pill" style="left:971px;top:1303px;width:271px;height:36px;background:#d3e3fd;color:#041e49;line-height:36px">Switch DevTools to Chinese</div>
<svg class="abs" style="left:2512px;top:1311px" width="20" height="20" viewBox="0 0 20 20"><path d="M4.4 4.3 L15.9 15.7 M15.9 4.3 L4.4 15.7" stroke="#474747" stroke-width="1.7"/></svg>
<div class="abs" style="left:0;top:1351px;width:2559px;height:40px;background:#edf1f9"></div>
<div class="abs" style="left:0;top:1391px;width:2559px;height:1px;background:#d3e3fd"></div>
<svg class="abs" style="left:10px;top:1358px" width="30" height="26" viewBox="0 0 30 26"><path d="M4 3 H24.4 V12.5 M4 3 V22.6 H13.4" fill="none" stroke="#474747" stroke-width="1.9" stroke-dasharray="1.9 2.6"/><path d="M13.4 12.5 H24.4 M13.4 12.5 V23 M13.4 12.5 L23.7 22.3" fill="none" stroke="#474747" stroke-width="2"/></svg>
<svg class="abs" style="left:50px;top:1358px" width="32" height="26" viewBox="0 0 32 26"><path d="M26 5.1 H8.2 V20.6 M4.3 20.6 H15.8" fill="none" stroke="#474747" stroke-width="2.2"/><rect x="19.4" y="8.6" width="8.1" height="12.6" rx="1" fill="none" stroke="#474747" stroke-width="2.2"/></svg>
<div class="abs" style="left:93px;top:1359px;width:2px;height:24px;background:#d3e3fd"></div>
<div class="abs tab" style="left:112px;top:1361px;color:#474747">Elements</div>
<div class="abs tab" style="left:221px;top:1361px;color:#474747">Console</div>
<div class="abs tab" style="left:321.7px;top:1361px;color:#474747">Sources</div>
<div class="abs tab" style="left:419.7px;top:1361px;color:#0b57d0">Network</div>
<div class="abs tab" style="left:524px;top:1361px;color:#474747">Performance</div>
<div class="abs tab" style="left:663.6px;top:1361px;color:#474747">Memory</div>
<div class="abs tab" style="left:767.3px;top:1361px;color:#474747">Application</div>
<div class="abs tab" style="left:896.4px;top:1361px;color:#474747">Privacy and security</div>
<div class="abs tab" style="left:1111.8px;top:1361px;color:#474747">Lighthouse</div>
<div class="abs tab" style="left:1238.8px;top:1361px;color:#474747">Recorder</div>
<div class="abs" style="left:405px;top:1388px;width:105px;height:3px;border-radius:3px 3px 0 0;background:#0b57d0"></div>
<div class="abs" style="left:2421px;top:1359px;width:2px;height:24px;background:#d3e3fd"></div>
<svg class="abs" style="left:2438px;top:1359px" width="24" height="24" viewBox="0 0 24 24"><polygon points="9.30,4.58 9.98,1.59 14.02,1.59 14.70,4.58 17.08,5.95 20.00,5.05 22.02,8.55 19.78,10.63 19.78,13.37 22.02,15.45 20.00,18.95 17.08,18.05 14.70,19.42 14.02,22.41 9.98,22.41 9.30,19.42 6.92,18.05 4.00,18.95 1.98,15.45 4.22,13.37 4.22,10.63 1.98,8.55 4.00,5.05 6.92,5.95" fill="none" stroke="#474747" stroke-width="1.9" stroke-linejoin="round"/><circle cx="12" cy="12" r="3.6" fill="#474747"/></svg>
<svg class="abs" style="left:2484px;top:1359px" width="16" height="24" viewBox="0 0 16 24"><circle cx="8" cy="5.3" r="2" fill="#474747"/><circle cx="8" cy="12.1" r="2" fill="#474747"/><circle cx="8" cy="18.9" r="2" fill="#474747"/></svg>
<svg class="abs" style="left:2520px;top:1359px" width="24" height="24" viewBox="0 0 24 24"><path d="M5 5.3 L19 19 M19 5.3 L5 19" stroke="#474747" stroke-width="2"/></svg>
<div class="abs" style="left:523px;top:1393px;width:178px;height:12px;border:1px solid #c7c7c7;border-radius:6px"></div>
</div></body></html>
